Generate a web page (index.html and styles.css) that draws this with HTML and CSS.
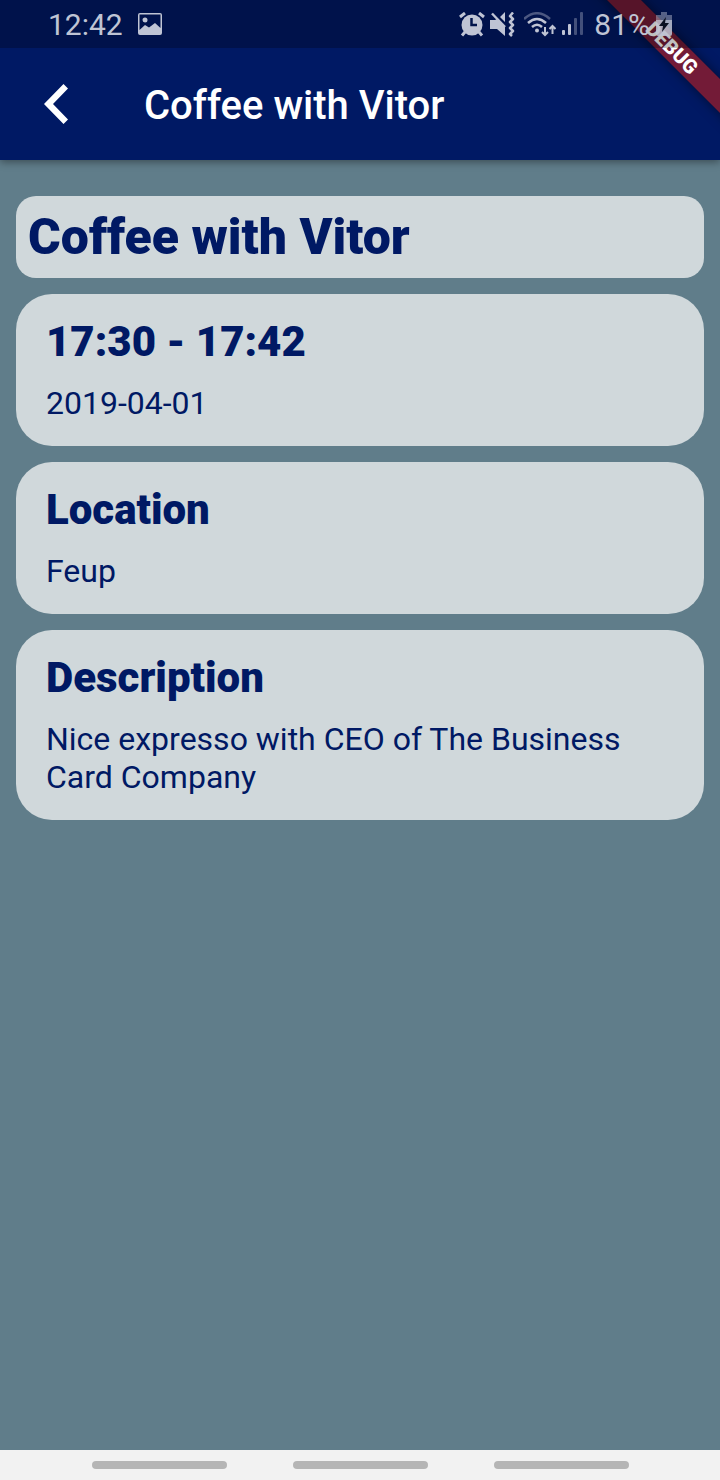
FILE: index.html
```html
<!DOCTYPE html>
<html lang="en">
<head>
<meta charset="utf-8">
<meta name="viewport" content="width=device-width, initial-scale=1">
<title>Coffee with Vitor</title>
<link rel="stylesheet" href="styles.css">
</head>
<body>
<div class="app">
  <header class="header">
    <div class="banner"><span class="banner-label">DEBUG</span></div>
    <div class="status">
      <span class="clock">12:42</span>
      <svg class="picture" width="24" height="22" viewBox="0 0 24 22" aria-hidden="true"><path fill="currentColor" fill-rule="evenodd" d="M2 0H22Q24 0 24 2V20Q24 22 22 22H2Q0 22 0 20V2Q0 0 2 0ZM1.500 1.500V17L7 12L11 14.500L17 10L22.500 15V1.500ZM7 4.500a2.500 2.500 0 1 1 0 5a2.500 2.500 0 0 1 0-5Z"/></svg>
      <div class="indicators">
        <svg width="26" height="25" viewBox="0 0 26 25" aria-hidden="true"><circle cx="13" cy="13" r="10.500" fill="currentColor"/><path d="M1 5L6 1M25 5L20 1M6 20L3 23.500M20 20L23 23.500" stroke="currentColor" stroke-width="3" fill="none"/><path d="M12.500 6V13H18" fill="none" stroke="#00134b" stroke-width="2.500"/></svg>
        <svg width="26" height="25" viewBox="0 0 26 25" aria-hidden="true"><path fill="currentColor" d="M0 8H5L7 7L15 15V24L7 17H0ZM10 5L15 0V10Z"/><path d="M2 1.500L15 15" stroke="currentColor" stroke-width="2.500"/><path d="M23 0.500L20 4L23 7L20 10L23 13L20 16L23 19L20 22L22 24" fill="none" stroke="currentColor" stroke-width="2.500" stroke-linejoin="round"/></svg>
        <svg class="wifi" width="32" height="25" viewBox="0 0 32 25" aria-hidden="true"><g fill="none" stroke="currentColor" stroke-width="2.500"><path opacity=".4" d="M0 7Q13-4.500 26 7"/><path d="M4 11Q13 3 22 11M8 15Q13 10.500 18 15"/><path stroke-width="2" d="M21 15V23M18 20L21 23L24 20M28.500 22V14M25.500 17L28.500 14L31.500 17"/></g><circle cx="13" cy="18.500" r="2" fill="currentColor"/></svg>
        <svg class="signal" width="22" height="24" viewBox="0 0 22 24" aria-hidden="true"><g fill="currentColor"><rect y="18" width="3" height="5" rx="1"/><rect x="6" y="12" width="3" height="11" rx="1"/><g opacity=".35"><rect x="12" y="6" width="3" height="17" rx="1"/><rect x="18" y="0" width="3" height="23" rx="1"/></g></g></svg>
        <span class="charge">81%</span>
        <svg class="battery" width="16" height="24" viewBox="0 0 16 24" aria-hidden="true"><path fill="currentColor" opacity=".45" d="M5 0H11V3H16V8H0V3H5Z"/><path fill="currentColor" opacity=".85" d="M0 8H16V22Q16 24 14 24H2Q0 24 0 22Z"/><path fill="#0b1020" d="M10 5L3 14H7L6 20L13 11H9Z"/></svg>
      </div>
    </div>
    <div class="toolbar">
      <button class="back" type="button" aria-label="Back"><svg width="24" height="40" viewBox="0 0 24 40" aria-hidden="true"><path fill="currentColor" d="M19.500 0L24 4.500L9 20L24 35.500L19.500 40L0 20Z"/></svg></button>
      <h1 class="toolbar-title">Coffee with Vitor</h1>
    </div>
  </header>
  <main class="content">
    <h2 class="event-title">Coffee with Vitor</h2>
    <section class="card"><h3 class="card-heading">17:30 - 17:42</h3><p class="card-text">2019-04-01</p></section>
    <section class="card"><h3 class="card-heading">Location</h3><p class="card-text">Feup</p></section>
    <section class="card"><h3 class="card-heading">Description</h3><p class="card-text">Nice expresso with CEO of The Business Card Company</p></section>
  </main>
  <nav class="system-nav" aria-label="System">
    <button class="pill" type="button" aria-label="Recent apps"></button>
    <button class="pill" type="button" aria-label="Home"></button>
    <button class="pill" type="button" aria-label="Go back"></button>
  </nav>
</div>
</body>
</html>
```
FILE: styles.css
```css
* { box-sizing: border-box; }

body {
  margin: 0;
  font-family: Roboto, "Liberation Sans", sans-serif;
  color: #001964;
  background: #607d8b;
}

h1, h2, h3, p { margin: 0; }

button {
  padding: 0;
  border: 0;
  background: none;
  color: inherit;
  cursor: pointer;
}

svg { display: block; flex: none; }

.app {
  display: flex;
  flex-direction: column;
  min-height: 100vh;
  background: #607d8a;
}

.header {
  position: relative;
  background: #001964;
  box-shadow: 0 2px 8px rgba(0, 0, 0, 0.4);
}

.banner {
  position: absolute;
  inset: 0;
  overflow: hidden;
  pointer-events: none;
}

.banner-label {
  position: absolute;
  top: 36px;
  right: -72px;
  width: 240px;
  height: 24px;
  transform: rotate(45deg);
  background: rgba(183, 28, 28, 0.627);
  box-shadow: 0 0 12px rgba(0, 0, 0, 0.5);
  color: #fff;
  font-size: 20px;
  font-weight: 900;
  line-height: 24px;
  text-align: center;
}

.status {
  position: relative;
  display: flex;
  align-items: center;
  height: 48px;
  padding: 0 48px;
  background: rgba(0, 0, 0, 0.25);
  color: #bfc4d4;
  font-size: 30px;
  line-height: 48px;
}

.clock, .charge { padding-top: 2px; }
.picture { margin-left: 15px; }

.indicators {
  display: flex;
  align-items: center;
  margin-left: auto;
}

.indicators svg + svg { margin-left: 5px; }
.indicators svg + .wifi { margin-left: 8px; }
.indicators .wifi + .signal { margin-left: 6px; }
.charge { margin-left: 10px; }
.battery { margin-left: 6px; }

.toolbar {
  display: flex;
  align-items: center;
  height: 112px;
  padding-right: 32px;
  color: #fff;
}

.back {
  display: grid;
  place-items: center;
  width: 112px;
  height: 112px;
}

.toolbar-title {
  margin-left: 32px;
  padding-top: 3px;
  font-size: 40px;
  font-weight: 500;
  line-height: 48px;
}

.content {
  flex: 1;
  display: flex;
  flex-direction: column;
  gap: 16px;
  padding: 36px 16px 16px;
}

.event-title {
  padding: 12px;
  border-radius: 20px;
  background: #d0d8db;
  font-size: 50px;
  font-weight: 900;
  line-height: 58px;
}

.card {
  display: flex;
  flex-direction: column;
  gap: 18px;
  padding: 24px 30px;
  border-radius: 36px;
  background: #d0d8db;
}

.card-heading {
  font-size: 42px;
  font-weight: 900;
  line-height: 48px;
}

.card-text {
  font-size: 32px;
  line-height: 38px;
}

.system-nav {
  display: flex;
  align-items: center;
  justify-content: center;
  gap: 66px;
  height: 30px;
  background: #f2f2f2;
}

.pill {
  width: 135px;
  height: 8px;
  border-radius: 4px;
  background: #b5b5b5;
}
```
